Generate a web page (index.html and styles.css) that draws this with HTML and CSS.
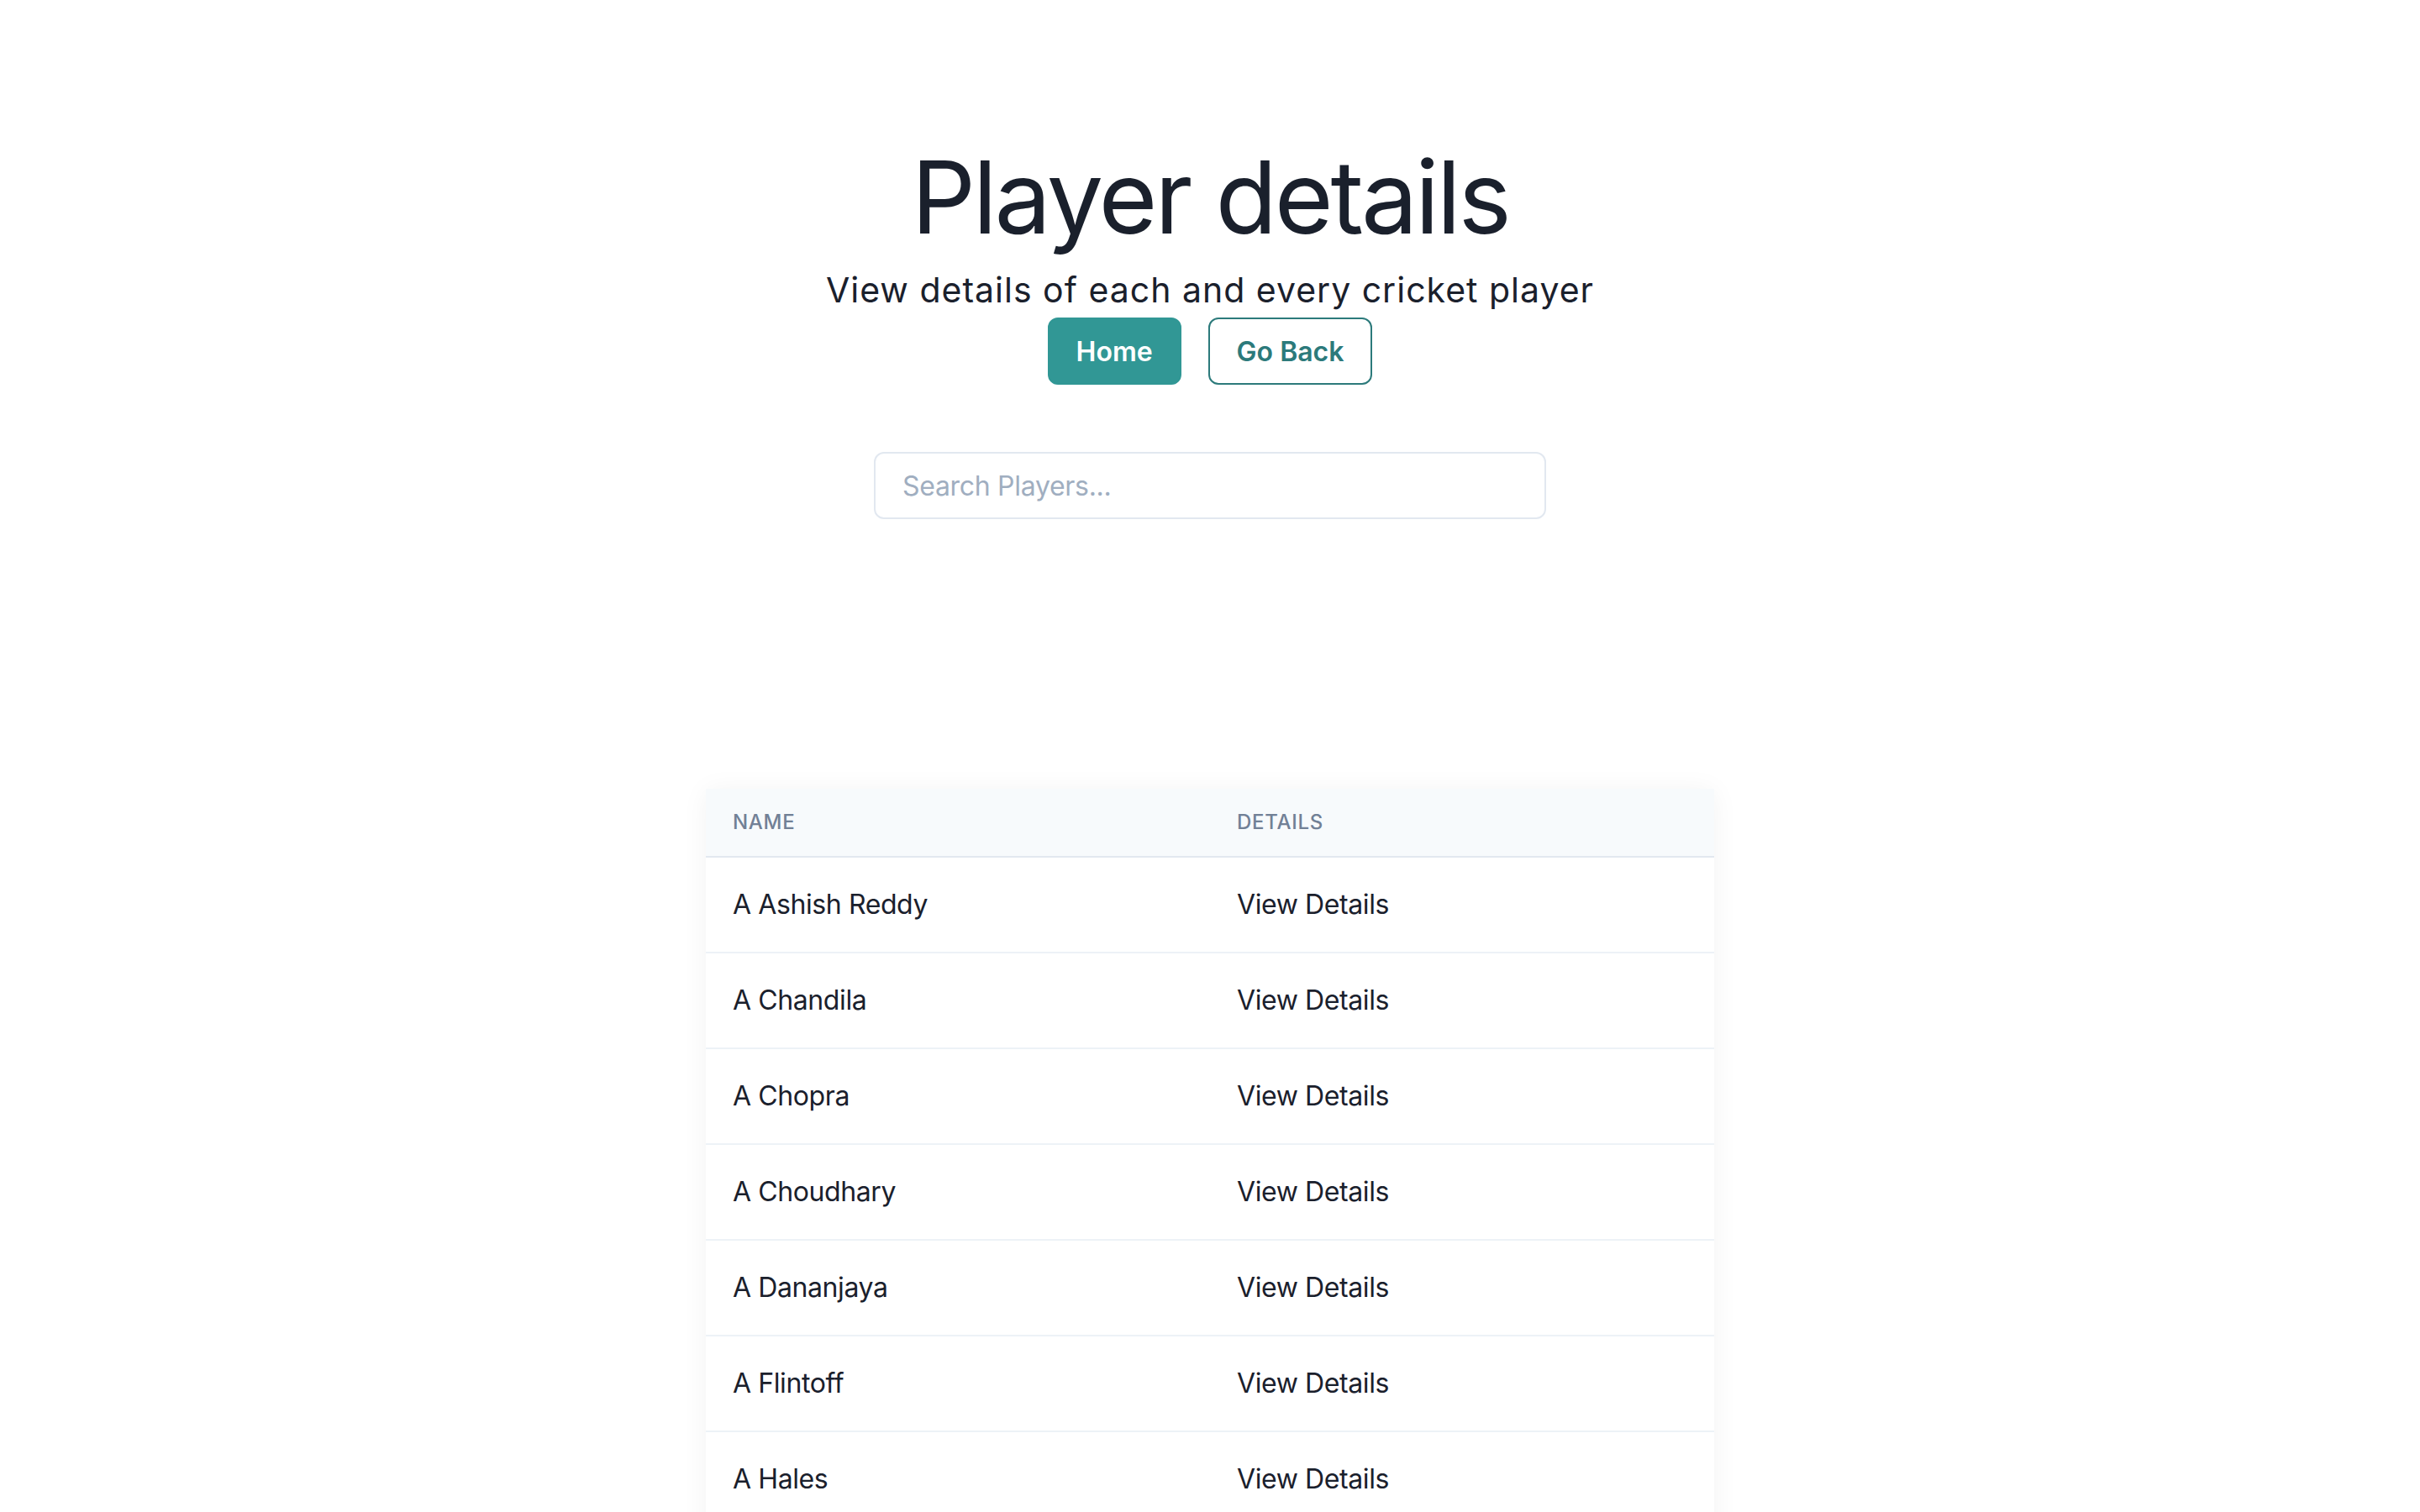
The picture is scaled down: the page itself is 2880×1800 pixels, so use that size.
FILE: index.html
```html
<!DOCTYPE html>
<html lang="en">
<head>
<meta charset="utf-8">
<title>Player details</title>
<link rel="stylesheet" href="styles.css">
</head>
<body>
<main class="page">
  <header class="hero">
    <h1 class="title">Player details</h1>
    <p class="subtitle">View details of each and every cricket player</p>
    <div class="actions">
      <button class="btn btn-solid">Home</button>
      <button class="btn btn-outline">Go Back</button>
    </div>
  </header>
  <div class="search">
    <input class="search-input" type="text" placeholder="Search Players...">
  </div>
  <div class="table-wrap">
    <table class="players">
      <thead>
        <tr><th>Name</th><th>Details</th></tr>
      </thead>
      <tbody>
        <tr><td>A Ashish Reddy</td><td>View Details</td></tr>
        <tr><td>A Chandila</td><td>View Details</td></tr>
        <tr><td>A Chopra</td><td>View Details</td></tr>
        <tr><td>A Choudhary</td><td>View Details</td></tr>
        <tr><td>A Dananjaya</td><td>View Details</td></tr>
        <tr><td>A Flintoff</td><td>View Details</td></tr>
        <tr><td>A Hales</td><td>View Details</td></tr>
        <tr><td>A Kumble</td><td>View Details</td></tr>
        <tr><td>A Mishra</td><td>View Details</td></tr>
      </tbody>
    </table>
  </div>
</main>
</body>
</html>
```
FILE: styles.css
```css
* { box-sizing: border-box; }
html, body { margin: 0; padding: 0; background: #ffffff; }
body {
  font-family: Inter, "Noto Sans", "Liberation Sans", sans-serif;
  color: #1A202C;
}
.page {
  display: flex;
  flex-direction: column;
  align-items: center;
  padding-top: 163px;
}
.hero {
  display: flex;
  flex-direction: column;
  align-items: center;
}
.title {
  margin: 0;
  font-size: 120px;
  line-height: 144px;
  font-weight: 400;
  letter-spacing: -3.3px;
  color: #1A202C;
}
.subtitle {
  margin: 8px 0 0;
  font-size: 41px;
  line-height: 60px;
  letter-spacing: 1px;
  color: #1A202C;
}
.actions {
  display: flex;
  gap: 32px;
  margin-top: 3px;
}
.btn {
  font-family: inherit;
  height: 80px;
  padding: 0 32px;
  border-radius: 12px;
  font-size: 32px;
  font-weight: 600;
  cursor: pointer;
}
.btn-solid {
  background: #319795;
  color: #ffffff;
  border: 2px solid #319795;
}
.btn-outline {
  background: #ffffff;
  color: #2C7A7B;
  border: 2px solid #2C7A7B;
}
.search {
  margin-top: 80px;
  width: 800px;
}
.search-input {
  width: 100%;
  height: 80px;
  border: 2px solid #E2E8F0;
  border-radius: 12px;
  padding: 0 32px;
  font-family: inherit;
  font-size: 32px;
  letter-spacing: -0.3px;
  color: #1A202C;
  outline: none;
}
.search-input::placeholder { color: #A0AEC0; }
.table-wrap {
  margin-top: 321px;
  width: 1200px;
  box-shadow: 0 2px 30px rgba(0, 0, 0, 0.05);
  background: #ffffff;
}
.players {
  width: 100%;
  border-collapse: collapse;
  table-layout: fixed;
}
.players th {
  text-align: left;
  background: #F7FAFC;
  padding: 24px 32px;
  font-size: 24px;
  line-height: 32px;
  font-weight: 500;
  letter-spacing: 0.03em;
  text-transform: uppercase;
  color: #718096;
  border-bottom: 2px solid #E2E8F0;
}
.players td {
  padding: 32px 32px;
  font-size: 32px;
  line-height: 48px;
  letter-spacing: -0.4px;
  color: #1A202C;
  border-bottom: 2px solid #EDF2F7;
}
```
